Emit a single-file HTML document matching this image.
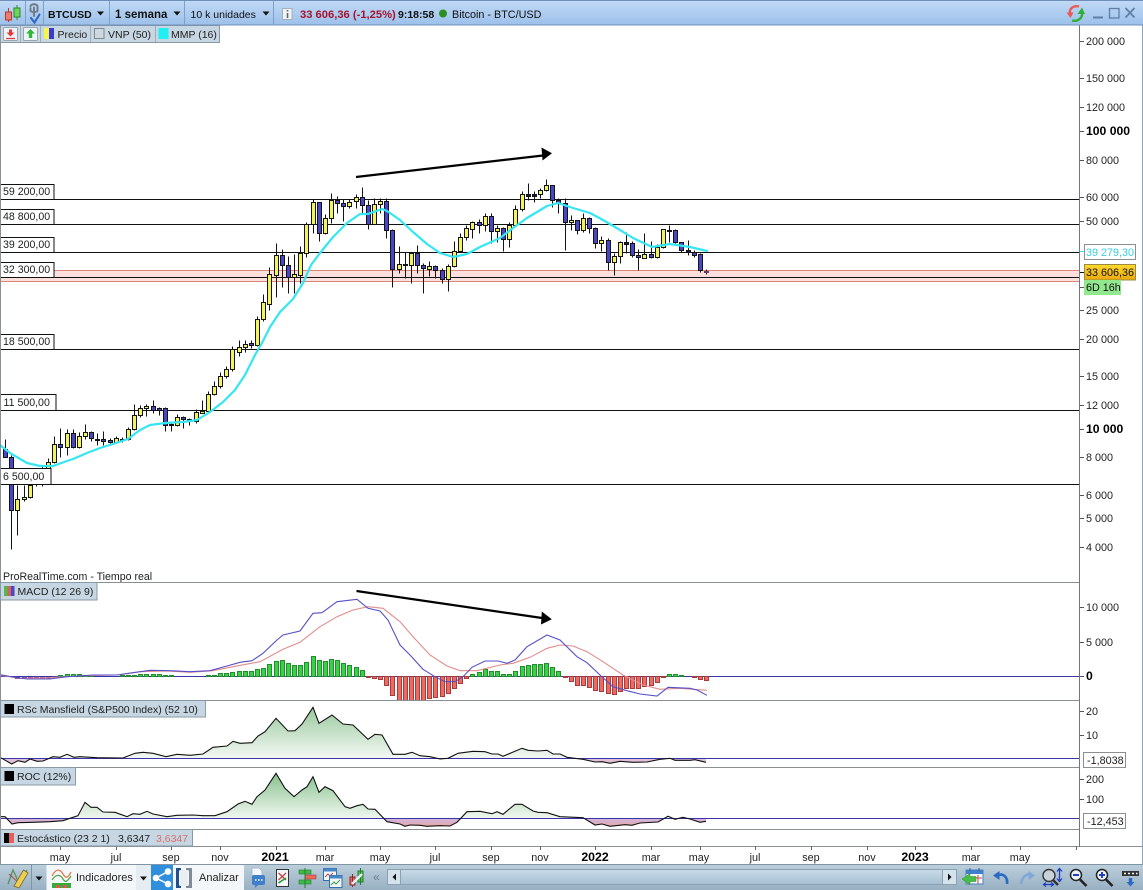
<!DOCTYPE html>
<html lang="es">
<head>
<meta charset="utf-8">
<title>BTCUSD</title>
<style>
html,body{margin:0;padding:0;background:#fff;width:1143px;height:890px;overflow:hidden}
svg{display:block;position:absolute;left:0;top:0;filter:blur(.3px)}
text{font-family:"Liberation Sans",Arial,sans-serif;fill:#222;font-size:10.7px}
.lv{font-size:10.6px}
.ax{font-size:10.8px}
.xl{font-size:10.8px;text-anchor:middle}
.lg{font-size:10.5px}
.b{font-weight:bold;fill:#000}
</style>
</head>
<body>
<svg width="1143" height="890" viewBox="0 0 1143 890" xmlns="http://www.w3.org/2000/svg">
<defs>
<linearGradient id="tb" x1="0" y1="0" x2="0" y2="1"><stop offset="0" stop-color="#c2daf6"/><stop offset="1" stop-color="#9cc0ea"/></linearGradient>
<linearGradient id="bb" x1="0" y1="0" x2="0" y2="1"><stop offset="0" stop-color="#bccfdc"/><stop offset="1" stop-color="#98b0c2"/></linearGradient>
<linearGradient id="sb" x1="0" y1="0" x2="0" y2="1"><stop offset="0" stop-color="#c9dbe8"/><stop offset="1" stop-color="#a6bfd2"/></linearGradient>
<linearGradient id="or" x1="0" y1="0" x2="0" y2="1"><stop offset="0" stop-color="#ffd92e"/><stop offset="1" stop-color="#e8a90c"/></linearGradient>
<linearGradient id="gu1" gradientUnits="userSpaceOnUse" x1="0" y1="707" x2="0" y2="758"><stop offset="0" stop-color="#98c99c"/><stop offset="1" stop-color="#f4f8f4"/></linearGradient>
<linearGradient id="gd1" gradientUnits="userSpaceOnUse" x1="0" y1="758" x2="0" y2="765"><stop offset="0" stop-color="#d8c4ec"/><stop offset="1" stop-color="#e8b8b8"/></linearGradient>
<linearGradient id="gu2" gradientUnits="userSpaceOnUse" x1="0" y1="773" x2="0" y2="818"><stop offset="0" stop-color="#88c28d"/><stop offset="1" stop-color="#f0f7f0"/></linearGradient>
<linearGradient id="gd2" gradientUnits="userSpaceOnUse" x1="0" y1="818" x2="0" y2="827"><stop offset="0" stop-color="#cdb8ea"/><stop offset="1" stop-color="#eaa49c"/></linearGradient>
<clipPath id="u1"><rect x="0" y="700" width="1080" height="58.3"/></clipPath>
<clipPath id="d1"><rect x="0" y="758.3" width="1080" height="9"/></clipPath>
<clipPath id="u2"><rect x="0" y="768" width="1080" height="50.3"/></clipPath>
<clipPath id="d2"><rect x="0" y="818.3" width="1080" height="11"/></clipPath>
</defs>

<rect width="1143" height="890" fill="#fff"/>

<!-- band and horizontal levels -->
<rect x="1" y="270" width="1079" height="11.5" fill="#fbdfdc"/>
<g stroke="#111" stroke-width="1" shape-rendering="crispEdges">
<path d="M1 199.5H1080M1 224.5H1080M1 252.5H1080M1 277.5H1080M1 349.5H1080M1 410.5H1080M1 484.5H1080"/>
</g>
<path d="M1 270.5H1080M1 281.5H1080" stroke="#d98678" stroke-width="1" shape-rendering="crispEdges"/>

<!-- candles -->
<g transform="translate(.5 .5)" stroke-width="1" stroke="#141414">
<path fill="none" d="M5 439V457M11 455V549M17 485V535M24 485V501M30 485V498M36 470V486M42 465V486M48 458V476M54 436V463M60 428V457M67 429V455M73 429V448M79 432V448M85 424V439M91 431V441M97 433V445M103 431V445M110 438V443M116 436V443M122 437V442M128 427V440M134 404V430M140 405V417M146 404V416M153 400V413M159 407V415M165 407V431M171 423V431M177 414V426M183 416V428M189 418V425M196 409V423M202 400V413M208 391V412M214 381V395M220 372V388M226 366V378M232 346V371M239 340V356M245 340V352M251 340V348M257 316V346M263 294V321M269 267V310M276 243V297M282 249V287M288 256V293M294 254V293M300 246V283M306 222V257M313 199V233M319 202V241M325 214V234M331 193V223M337 196V213M343 199V221M349 199V208M356 194V208M362 187V213M368 200V229M374 198V224M380 198V213M386 198V238M392 229V287M399 246V273M405 252V278M411 252V283M417 245V273M423 263V293M429 261V276M435 265V278M442 268V283M448 264V291M454 241V267M460 233V252M466 225V240M472 221V238M479 219V233M485 213V231M491 213V243M497 225V242M503 227V251M509 222V247M515 205V226M522 191V211M528 183V200M534 191V202M540 188V198M546 179V191M552 185V207M558 198V213M565 198V250M571 215V230M577 220V234M583 213V232M589 217V233M595 227V248M601 236V251M608 238V270M614 253V275M620 241V263M626 232V253M632 241V257M638 249V270M644 233V258M651 241V258M657 244V258M663 229V248M669 225V242M675 229V243M681 242V252M688 240V255M694 250V257M700 253V272M706 269V274"/>
<path fill="#f3f35c" d="M15 499h4V510h-4zM22 497h4V499h-4zM28 485h4V497h-4zM34 475h4V481h-4zM40 470h4V478h-4zM46 462h4V474h-4zM52 444h4V462h-4zM65 433h4V447h-4zM77 436h4V447h-4zM83 432h4V436h-4zM114 438h4V442h-4zM126 429h4V439h-4zM132 415h4V429h-4zM138 408h4V415h-4zM144 406h4V408h-4zM175 417h4V425h-4zM187 419h4V420h-4zM194 412h4V421h-4zM200 411h4V413h-4zM206 394h4V411h-4zM212 386h4V394h-4zM218 376h4V386h-4zM224 369h4V376h-4zM230 349h4V369h-4zM237 347h4V352h-4zM243 344h4V347h-4zM255 319h4V345h-4zM261 302h4V319h-4zM267 274h4V304h-4zM274 255h4V275h-4zM292 274h4V277h-4zM298 253h4V275h-4zM304 224h4V253h-4zM311 202h4V224h-4zM323 218h4V233h-4zM329 200h4V218h-4zM347 202h4V206h-4zM354 197h4V201h-4zM372 204h4V224h-4zM378 201h4V204h-4zM397 264h4V269h-4zM409 253h4V265h-4zM427 266h4V269h-4zM446 266h4V279h-4zM452 251h4V266h-4zM458 237h4V251h-4zM464 228h4V237h-4zM470 222h4V229h-4zM483 216h4V225h-4zM495 228h4V231h-4zM507 225h4V239h-4zM513 209h4V225h-4zM520 194h4V209h-4zM538 190h4V194h-4zM544 185h4V190h-4zM569 220h4V222h-4zM581 218h4V230h-4zM599 240h4V243h-4zM612 256h4V262h-4zM618 242h4V256h-4zM642 254h4V258h-4zM655 247h4V257h-4zM661 229h4V247h-4z"/>
<path fill="#4747c6" d="M3 449h4V457h-4zM9 457h4V510h-4zM58 444h4V447h-4zM71 433h4V447h-4zM89 432h4V438h-4zM101 439h4V441h-4zM108 440h4V442h-4zM120 439h4V440h-4zM151 406h4V410h-4zM157 408h4V410h-4zM163 408h4V425h-4zM169 424h4V425h-4zM181 417h4V419h-4zM249 343h4V345h-4zM280 255h4V265h-4zM286 265h4V277h-4zM317 202h4V233h-4zM335 200h4V203h-4zM341 203h4V206h-4zM360 197h4V205h-4zM366 205h4V224h-4zM384 201h4V230h-4zM390 230h4V269h-4zM415 253h4V265h-4zM421 265h4V268h-4zM433 266h4V270h-4zM440 270h4V279h-4zM477 222h4V225h-4zM489 216h4V231h-4zM501 228h4V239h-4zM550 185h4V200h-4zM556 200h4V203h-4zM563 203h4V222h-4zM575 220h4V230h-4zM587 218h4V228h-4zM593 228h4V243h-4zM606 240h4V262h-4zM630 243h4V255h-4zM636 255h4V257h-4zM649 254h4V257h-4zM673 230h4V242h-4zM679 242h4V250h-4zM692 252h4V255h-4zM698 254h4V270h-4z"/>
<path fill="#1a1a3a" d="M95 439h4V440h-4zM403 264h4V265h-4zM526 194h4V196h-4zM532 194h4V196h-4zM624 242h4V244h-4zM667 230h4V231h-4zM686 250h4V252h-4z"/>
<path fill="#a05a9a" stroke="#6a3a6a" d="M704 271h4V272h-4z"/>
</g>

<!-- MMP 16 -->
<polyline fill="none" stroke="#35e6f2" stroke-width="2.2" stroke-linejoin="round" stroke-linecap="round" points="0,445 10,453 27,463 40,466 53,466 67,461 73,459 87,453 100,448 113,444 128,439 140,430 150,425 165,423 183,422 197,420 210,412 223,402 235,390 245,375 255,355 262,343 270,327 280,312 293,299 303,283 311,265 320,253 333,237 347,223 360,214 368,214 382,209 387,211 400,220 413,232 427,244 440,253 453,257 467,254 480,247 500,238 513,228 527,218 547,206 558,203 573,208 590,213 603,220 620,230 633,238 652,247 670,244 690,247 707,251"/>

<!-- arrow 1 -->
<path d="M356 177L543 155.5" stroke="#000" stroke-width="2.2" fill="none"/>
<path d="M541.5 147.5L552 153.2L542.5 160.5Z" fill="#000"/>

<!-- level labels -->
<g fill="#fff" stroke="#111" stroke-width="1" shape-rendering="crispEdges">
<rect x="-1" y="184.5" width="55" height="15"/>
<rect x="-1" y="209.5" width="55" height="15"/>
<rect x="-1" y="237.5" width="55" height="15"/>
<rect x="-1" y="262.5" width="55" height="15"/>
<rect x="-1" y="334.5" width="55" height="15"/>
<rect x="-1" y="394.5" width="57" height="16"/>
<rect x="-1" y="468.5" width="52" height="16"/>
</g>
<text class="lv" x="3" y="195">59 200,00</text>
<text class="lv" x="3" y="220">48 800,00</text>
<text class="lv" x="3" y="248">39 200,00</text>
<text class="lv" x="3" y="273">32 300,00</text>
<text class="lv" x="3" y="345">18 500,00</text>
<text class="lv" x="3.5" y="406">11 500,00</text>
<text class="lv" x="3" y="480">6 500,00</text>
<text class="lv" x="3" y="580" style="font-size:10.6px">ProRealTime.com - Tiempo real</text>

<!-- MACD panel -->
<path d="M1 676.5H1080" stroke="#3a36a6" stroke-width="1.3" shape-rendering="crispEdges"/>
<g transform="translate(.5 .5)">
<path fill="#3cd048" stroke="#1f8f2c" d="M58 675h4V676h-4zM65 674h4V676h-4zM71 674h4V676h-4zM77 674h4V676h-4zM83 675h4V676h-4zM89 675h4V676h-4zM120 675h4V676h-4zM126 675h4V676h-4zM132 675h4V676h-4zM138 674h4V676h-4zM144 674h4V676h-4zM151 674h4V676h-4zM157 674h4V676h-4zM163 675h4V676h-4zM169 675h4V676h-4zM206 675h4V676h-4zM212 675h4V676h-4zM218 673h4V676h-4zM224 673h4V676h-4zM230 672h4V676h-4zM237 671h4V676h-4zM243 671h4V676h-4zM249 671h4V676h-4zM255 669h4V676h-4zM261 668h4V676h-4zM267 664h4V676h-4zM274 661h4V676h-4zM280 660h4V676h-4zM286 663h4V676h-4zM292 665h4V676h-4zM298 665h4V676h-4zM304 662h4V676h-4zM311 656h4V676h-4zM317 660h4V676h-4zM323 661h4V676h-4zM329 659h4V676h-4zM335 660h4V676h-4zM341 663h4V676h-4zM347 665h4V676h-4zM354 667h4V676h-4zM360 670h4V676h-4zM470 674h4V676h-4zM477 672h4V676h-4zM483 669h4V676h-4zM489 671h4V676h-4zM495 671h4V676h-4zM501 674h4V676h-4zM507 674h4V676h-4zM513 671h4V676h-4zM520 666h4V676h-4zM526 665h4V676h-4zM532 664h4V676h-4zM538 664h4V676h-4zM544 663h4V676h-4zM550 667h4V676h-4zM556 671h4V676h-4zM667 674h4V676h-4zM673 674h4V676h-4zM679 675h4V676h-4z"/>
<path fill="#ec6a62" stroke="#a83a3a" d="M366 676h4V677h-4zM372 676h4V678h-4zM378 676h4V679h-4zM384 676h4V685h-4zM390 676h4V695h-4zM397 676h4V700h-4zM403 676h4V700h-4zM409 676h4V700h-4zM415 676h4V700h-4zM421 676h4V700h-4zM427 676h4V698h-4zM433 676h4V697h-4zM440 676h4V696h-4zM446 676h4V693h-4zM452 676h4V688h-4zM458 676h4V683h-4zM464 676h4V678h-4zM563 676h4V677h-4zM569 676h4V681h-4zM575 676h4V685h-4zM581 676h4V685h-4zM587 676h4V687h-4zM593 676h4V690h-4zM599 676h4V691h-4zM606 676h4V693h-4zM612 676h4V694h-4zM618 676h4V691h-4zM624 676h4V688h-4zM630 676h4V688h-4zM636 676h4V688h-4zM642 676h4V686h-4zM649 676h4V685h-4zM655 676h4V682h-4zM661 676h4V677h-4zM692 676h4V677h-4zM698 676h4V679h-4zM704 676h4V680h-4z"/>
<path fill="#7a3fb0" stroke="#6a3aa0" d="M15 677h4V678h-4zM22 677h4V678h-4zM28 677h4V678h-4zM34 677h4V678h-4zM40 677h4V678h-4zM46 677h4V678h-4z"/>
</g>
<polyline fill="none" stroke="#e38c8c" stroke-width="1.1" points="0,675.3 20,678.3 50,677.7 83,675.7 117,675 140,671.7 167,671 190,672.3 213,670.7 233,666.7 260,661.7 283,649.3 300,642.3 320,626.7 337,616.7 353,610 368,606.7 383,608.3 400,621.7 413,636.7 430,655 447,666 460,670.7 477,670.7 500,665 513,663.3 530,657.3 547,648.3 560,645 573,646 587,651.7 603,661.7 623,675 643,685 660,689.3 680,688.3 707,690.3"/>
<polyline fill="none" stroke="#5650c8" stroke-width="1.1" points="0,674.7 13,677 27,679 50,679 67,676.7 93,675 117,675 133,672.7 150,670.3 170,670.7 190,671.7 210,670.7 227,666 240,662.3 252,660.7 263,653.3 277,640 283,635 300,631 313,613.3 322,612.7 337,601.7 357,599.3 368,608.3 380,611 388,620 400,645 410,655 423,669.3 435,676.7 445,681.7 455,681.7 463,676.7 472,667.3 485,661 498,661 507,663.3 515,660 527,646.7 547,635 560,640 577,656.7 587,662.7 600,675 613,686.7 627,690.7 640,694 657,696 668,687.3 690,688.3 697,690 707,695.3"/>
<path d="M356.5 591L542 618" stroke="#000" stroke-width="2.2" fill="none"/>
<path d="M541.8 611.5L551.8 619.3L541 624.5Z" fill="#000"/>

<!-- RSc panel -->
<path clip-path="url(#u1)" fill="url(#gu1)" d="M0,758.3 0,757.3 11.7,764 18,760.7 25,762.3 30,759 37,761.3 43,761 53,756.7 60,757.3 67,754.3 74,757.3 80,756.7 97,757.7 123,758 135,753.3 143,752.3 153,753.3 166,756.7 177,754.3 190,755.3 203,754 213,747.3 227,746 233,741.3 240,743.3 252,742.7 258,736 265,731.7 276,718.3 288,731 295,730.7 302,724 313,707.3 319,723.3 332,715 343,724 353,725 368,739.3 375,734.3 382,735 393,754.3 405,754.3 412,752.3 420,755.7 430,756.7 440,759 448,758.3 458,753.3 473,751.3 485,751.7 492,754 498,754 503,756.3 522,748.3 528,750.3 538,751 547,750.3 553,754 560,754 567,757.3 583,759.3 595,762 602,761.7 610,763.3 620,761.3 633,762.3 647,762 660,759.3 670,758.3 675,760.3 690,760.3 695,759.7 706,762.3 706,758.3Z"/>
<path clip-path="url(#d1)" fill="url(#gd1)" d="M0,758.3 0,757.3 11.7,764 18,760.7 25,762.3 30,759 37,761.3 43,761 53,756.7 123,758 440,759 448,758.3 458,753.3 567,757.3 583,759.3 595,762 602,761.7 610,763.3 620,761.3 633,762.3 647,762 660,759.3 670,758.3 675,760.3 690,760.3 695,759.7 706,762.3 706,758.3Z"/>
<path d="M1 758.5H1080" stroke="#3a36a6" stroke-width="1.2" shape-rendering="crispEdges"/>
<polyline fill="none" stroke="#111" stroke-width="1.1" points="0,757.3 11.7,764 18,760.7 25,762.3 30,759 37,761.3 43,761 53,756.7 60,757.3 67,754.3 74,757.3 80,756.7 97,757.7 123,758 135,753.3 143,752.3 153,753.3 166,756.7 177,754.3 190,755.3 203,754 213,747.3 227,746 233,741.3 240,743.3 252,742.7 258,736 265,731.7 276,718.3 288,731 295,730.7 302,724 313,707.3 319,723.3 332,715 343,724 353,725 368,739.3 375,734.3 382,735 393,754.3 405,754.3 412,752.3 420,755.7 430,756.7 440,759 448,758.3 458,753.3 473,751.3 485,751.7 492,754 498,754 503,756.3 522,748.3 528,750.3 538,751 547,750.3 553,754 560,754 567,757.3 583,759.3 595,762 602,761.7 610,763.3 620,761.3 633,762.3 647,762 660,759.3 670,758.3 675,760.3 690,760.3 695,759.7 706,762.3"/>

<!-- ROC panel -->
<path clip-path="url(#u2)" fill="url(#gu2)" d="M0,818.3 0,816.7 5,816.7 12,824 78,815.7 85,802.3 91,807.3 97,807.3 103,812 115,812.3 127,816.7 133,813.7 140,814.3 147,811.3 153,814 167,816.7 177,815.3 193,815 203,815.7 215,815.7 227,811.7 238,804 245,801.3 252,804.3 257,796.7 265,790 276,773.3 285,788.3 294,796.7 302,790 307,786.7 313,776.7 319,792.3 325,786.7 333,790.7 345,806.7 350,808.3 357,805.7 363,804.3 368,809 375,809.3 387,821.7 457,822.3 467,811.7 480,811.3 492,813.7 497,811.7 503,814.3 515,804.3 522,804.3 533,811 538,812.3 547,812.7 560,816.7 583,817.7 595,825 658,822 668,816.3 675,819.3 683,817.3 690,819 700,822.3 706,821.3 706,818.3Z"/>
<path clip-path="url(#d2)" fill="url(#gd2)" d="M0,818.3 5,816.7 12,824 18,822.7 33,822.3 50,821.7 63,820.7 78,815.7 370,809 387,821.7 400,824 405,826.3 410,825 420,825.3 427,826.3 440,825.7 450,826 457,822.3 467,811.7 583,817.7 595,825 602,824 610,826.3 625,824.7 632,825.3 640,823 658,822 668,816.3 675,819.3 683,817.3 690,819 700,822.3 706,821.3 706,818.3Z"/>
<path d="M1 818.5H1080" stroke="#3a36a6" stroke-width="1.2" shape-rendering="crispEdges"/>
<polyline fill="none" stroke="#111" stroke-width="1.1" points="0,816.7 5,816.7 12,824 18,822.7 33,822.3 50,821.7 63,820.7 78,815.7 85,802.3 91,807.3 97,807.3 103,812 115,812.3 127,816.7 133,813.7 140,814.3 147,811.3 153,814 167,816.7 177,815.3 193,815 203,815.7 215,815.7 227,811.7 238,804 245,801.3 252,804.3 257,796.7 265,790 276,773.3 285,788.3 294,796.7 302,790 307,786.7 313,776.7 319,792.3 325,786.7 333,790.7 345,806.7 350,808.3 357,805.7 363,804.3 368,809 375,809.3 387,821.7 400,824 405,826.3 410,825 420,825.3 427,826.3 440,825.7 450,826 457,822.3 467,811.7 480,811.3 492,813.7 497,811.7 503,814.3 515,804.3 522,804.3 533,811 538,812.3 547,812.7 560,816.7 583,817.7 595,825 602,824 610,826.3 625,824.7 632,825.3 640,823 658,822 668,816.3 675,819.3 683,817.3 690,819 700,822.3 706,821.3"/>

<!-- panel separators & frame -->
<g stroke="#8a8f94" stroke-width="1" shape-rendering="crispEdges" fill="none">
<path d="M1 582.5H1080M1 700.5H1080M1 767.5H1080M1 829.5H1080"/>
<path d="M0 846.5H1143" stroke="#8a8f94"/>
<path d="M0.5 25V864"/>
<path d="M1079.5 25V847" stroke="#70777d"/>
<path d="M1142.5 25V864" stroke="#8fa4b8"/>
</g>

<!-- price axis ticks -->
<path stroke="#555" stroke-width="1" shape-rendering="crispEdges" d="M1080 41.5h4M1080 78.5h4M1080 107.5h4M1080 131.5h4M1080 160.5h4M1080 197.5h4M1080 221.5h4M1080 310.5h4M1080 339.5h4M1080 376.5h4M1080 405.5h4M1080 429.5h4M1080 457.5h4M1080 495.5h4M1080 518.5h4M1080 547.5h4M1080 607.5h4M1080 642.5h4M1080 676.5h4M1080 711.5h4M1080 735.5h4M1080 779.5h4M1080 799.5h4"/>
<g class="ax">
<text class="ax" x="1086" y="45">200 000</text>
<text class="ax" x="1086" y="82">150 000</text>
<text class="ax" x="1086" y="111">120 000</text>
<text class="ax b" x="1086" y="135" style="font-size:12.2px">100 000</text>
<text class="ax" x="1086" y="164">80 000</text>
<text class="ax" x="1086" y="201">60 000</text>
<text class="ax" x="1086" y="225">50 000</text>
<text class="ax" x="1086" y="314">25 000</text>
<text class="ax" x="1086" y="343">20 000</text>
<text class="ax" x="1086" y="380">15 000</text>
<text class="ax" x="1086" y="409">12 000</text>
<text class="ax b" x="1086" y="433" style="font-size:12.2px">10 000</text>
<text class="ax" x="1086" y="461">8 000</text>
<text class="ax" x="1086" y="499">6 000</text>
<text class="ax" x="1086" y="522">5 000</text>
<text class="ax" x="1086" y="551">4 000</text>
<text class="ax" x="1086" y="611">10 000</text>
<text class="ax" x="1086" y="646">5 000</text>
<text class="ax b" x="1086" y="680" style="font-size:12.2px">0</text>
<text class="ax" x="1086" y="715">20</text>
<text class="ax" x="1086" y="739">10</text>
<text class="ax" x="1086" y="783">200</text>
<text class="ax" x="1086" y="803">100</text>
</g>

<!-- price badges -->
<path d="M1080 251.5h4" stroke="#35e6f2" shape-rendering="crispEdges"/>
<rect x="1084.5" y="244.5" width="51" height="15" fill="#fff" stroke="#8a8f94" shape-rendering="crispEdges"/>
<text class="ax" x="1086" y="256" style="fill:#37cfe0">39 279,30</text>
<path d="M1080 272.5h4" stroke="#111" shape-rendering="crispEdges"/>
<rect x="1084.5" y="264.5" width="51" height="15.5" fill="url(#or)" stroke="#9a8a40" shape-rendering="crispEdges"/>
<text class="ax" x="1086" y="276" style="fill:#111">33 606,36</text>
<path d="M1080 287.5h4" stroke="#555" shape-rendering="crispEdges"/>
<rect x="1084" y="280" width="37" height="15" fill="#92e88e"/>
<text class="ax" x="1086" y="291" style="fill:#111">6D 16h</text>
<rect x="1083.5" y="752.5" width="42" height="15" fill="#fff" stroke="#8a8f94" shape-rendering="crispEdges"/>
<text class="ax" x="1087" y="764">-1,8038</text>
<rect x="1083.5" y="813.5" width="42" height="15" fill="#fff" stroke="#8a8f94" shape-rendering="crispEdges"/>
<text class="ax" x="1087" y="825">-12,453</text>

<!-- x axis -->
<path stroke="#666" shape-rendering="crispEdges" d="M60.5 846v4M116.5 846v4M171.5 846v4M220.5 846v4M276.5 846v4M325.5 846v4M380.5 846v4M435.5 846v4M491.5 846v4M540.5 846v4M595.5 846v4M651.5 846v4M700.5 846v4M755.5 846v4M811.5 846v4M867.5 846v4M915.5 846v4M971.5 846v4M1020.5 846v4M1076.5 846v4"/>
<text class="xl" x="60" y="861">may</text>
<text class="xl" x="116" y="861">jul</text>
<text class="xl" x="171" y="861">sep</text>
<text class="xl" x="220" y="861">nov</text>
<text class="xl b" x="275" y="861" style="font-size:12.3px">2021</text>
<text class="xl" x="325" y="861">mar</text>
<text class="xl" x="380" y="861">may</text>
<text class="xl" x="435" y="861">jul</text>
<text class="xl" x="491" y="861">sep</text>
<text class="xl" x="540" y="861">nov</text>
<text class="xl b" x="595" y="861" style="font-size:12.3px">2022</text>
<text class="xl" x="651" y="861">mar</text>
<text class="xl" x="699" y="861">may</text>
<text class="xl" x="755" y="861">jul</text>
<text class="xl" x="811" y="861">sep</text>
<text class="xl" x="867" y="861">nov</text>
<text class="xl b" x="915" y="861" style="font-size:12.3px">2023</text>
<text class="xl" x="971" y="861">mar</text>
<text class="xl" x="1020" y="861">may</text>

<!-- indicator legends -->
<g fill="#c6d6e2" stroke="#8a99a6" shape-rendering="crispEdges">
<rect x="0.5" y="582.5" width="96.5" height="17.5"/>
<rect x="0.5" y="700.5" width="205" height="16.5"/>
<rect x="0.5" y="767.5" width="75" height="17.5"/>
<rect x="0.5" y="829.5" width="192" height="16.5"/>
</g>
<rect x="4" y="586" width="3.5" height="10" fill="#55b84f"/><rect x="7.5" y="586" width="3.5" height="10" fill="#d8605a"/><rect x="11" y="586" width="3.5" height="10" fill="#4a48c8"/>
<text class="lg" x="17.5" y="595">MACD (12 26 9)</text>
<rect x="4.5" y="704" width="9.5" height="10" fill="#000"/>
<text class="lg" x="17" y="713">RSc Mansfield (S&amp;P500 Index) (52 10)</text>
<rect x="4.5" y="771" width="9.5" height="10" fill="#000"/>
<text class="lg" x="17" y="780">ROC (12%)</text>
<rect x="4" y="833" width="5" height="10" fill="#000"/><rect x="9" y="833" width="5" height="10" fill="#e4605a"/>
<text class="lg" x="17" y="842">Estocástico (23 2 1)</text>
<text class="lg" x="118" y="842">3,6347</text>
<text class="lg" x="156" y="842" style="fill:#d9706c">3,6347</text>

<!-- legend row -->
<rect x="0.5" y="25.5" width="219" height="17" fill="#c6d6e2" stroke="#8a99a6" shape-rendering="crispEdges"/>
<path d="M90.5 26v16M155.5 26v16M20.5 26v16M40.5 26v16" stroke="#a0aeb9" shape-rendering="crispEdges"/>
<rect x="3.5" y="27.5" width="14" height="13" rx="1" fill="#eef3f7" stroke="#9aa7b2"/>
<path d="M10.5 36.5L6.5 32.5H9V29.5H12V32.5H14.5Z" fill="#e23a3a"/><path d="M6 38.5h9" stroke="#e23a3a" stroke-width="1.3"/>
<rect x="23.5" y="27.5" width="14" height="13" rx="1" fill="#eef3f7" stroke="#9aa7b2"/>
<path d="M30.5 29L35 33.5H32.2V38H28.8V33.5H26Z" fill="#2fb838"/>
<rect x="44" y="28" width="5" height="11" fill="#f6f64a"/><rect x="49" y="28" width="5" height="11" fill="#3a3ad0"/>
<text class="lg" x="57.5" y="38">Precio</text>
<rect x="94.5" y="28.5" width="9.5" height="10" fill="#cfd8de" stroke="#7f8a92"/>
<text class="lg" x="108" y="38">VNP (50)</text>
<rect x="158.5" y="28" width="10" height="11" fill="#20f0f4"/>
<text class="lg" x="171" y="38">MMP (16)</text>

<!-- top toolbar -->
<rect x="0" y="0" width="1143" height="25" fill="url(#tb)"/>
<path d="M0 0.5H1143M0 25H1143" stroke="#6e90b8" shape-rendering="crispEdges"/>
<path d="M25.5 1V25M43.5 1V25M109.5 1V25M184.5 1V25M273.5 1V25" stroke="#7e9fc6" shape-rendering="crispEdges"/>
<path d="M8.5 8V22" stroke="#c0392b"/><rect x="5.5" y="12" width="6" height="8" fill="#ee7b70" stroke="#b03a30"/>
<path d="M17 5V20" stroke="#2a8a2a"/><rect x="14" y="8" width="6" height="9" fill="#6ed35c" stroke="#2a8a2a"/>
<g fill="none" stroke-linecap="round">
<path d="M30.5 6.5C30.5 3.5 37.5 3.5 37.5 6.5V10.5C37.5 12.5 30.5 12.5 30.5 10.5V8.5M34 7.5V16" stroke="#6d7a88" stroke-width="1.9"/>
<path d="M31 18L34.5 22.5L39.5 14.5" stroke="#3068c8" stroke-width="2.1"/>
</g>
<text class="b" x="48" y="18" style="font-size:10.5px;fill:#111">BTCUSD</text>
<path d="M97 11.5h7l-3.5 4z" fill="#111"/>
<text class="b" x="115" y="18" style="font-size:11.5px;fill:#111">1 semana</text>
<path d="M173.5 11.5h7l-3.5 4z" fill="#111"/>
<text x="190.5" y="18" style="font-size:10.5px;fill:#111">10 k unidades</text>
<path d="M262.5 11.5h7l-3.5 4z" fill="#111"/>
<rect x="282.5" y="8.5" width="9.5" height="11" fill="#f1f3f5" stroke="#a5b0ba"/>
<path d="M287.5 10v1.5M287.5 13v5" stroke="#5f6b74" stroke-width="1.6"/>
<text class="b" x="300" y="18" style="font-size:11.2px;fill:#a8142c">33 606,36 (-1,25%)</text>
<text class="b" x="398" y="18" style="font-size:10.5px;fill:#111">9:18:58</text>
<circle cx="443" cy="13.5" r="4" fill="#2f8f22"/>
<text x="452" y="18" style="font-size:10.8px;fill:#111">Bitcoin - BTC/USD</text>

<!-- window controls -->
<path d="M1079 6.5C1073 5 1069 9 1070 14" fill="none" stroke="#ec5a55" stroke-width="2.4"/>
<path d="M1066.5 12.5L1070.5 18L1073.5 12.5Z" fill="#ec5a55"/>
<path d="M1072 20.5C1078 22 1083 18 1082 12" fill="none" stroke="#2fae38" stroke-width="2.4"/>
<path d="M1077.5 14L1082 7.5L1085 14Z" fill="#2fae38"/>
<path d="M1093 17.5h10" stroke="#5f7fa6" stroke-width="2"/>
<rect x="1109.5" y="8.5" width="9.5" height="9.5" fill="none" stroke="#5f7fa6" stroke-width="1.3"/>
<path d="M1125.5 8L1134.5 17.5M1134.5 8L1125.5 17.5" stroke="#5f7fa6" stroke-width="1.8"/>

<!-- bottom toolbar -->
<rect x="0" y="864" width="1143" height="26" fill="url(#bb)"/>
<path d="M0 864.5H1143" stroke="#7f95a5" shape-rendering="crispEdges"/>
<rect x="46.5" y="865" width="89.5" height="25" fill="#f4f7f9"/>
<rect x="136" y="865" width="15" height="25" fill="#e6edf2"/>
<rect x="151" y="865" width="22" height="25" fill="#2f8fdc"/>
<rect x="173" y="865" width="71" height="25" fill="#f4f7f9"/>
<path d="M31.5 865V890" stroke="#7f95a5"/>

<!-- draw tools icon -->
<path d="M8 884L13 870L19 883L27 870" fill="none" stroke="#5b8f5b" stroke-width="1.3"/>
<path d="M9 874L20 884" stroke="#b04a4a" stroke-width="1.1"/>
<path d="M14 886L23.5 870L28 873L19 888Z" fill="#edcf52" stroke="#7a6a2a" stroke-width=".8"/>
<path d="M35.5 876.5h7l-3.5 4z" fill="#111"/>

<!-- Indicadores icon -->
<path d="M52 876C56 868 60 869 63 874S68 878 71 872" fill="none" stroke="#e07a50" stroke-width="1.3"/>
<path d="M52 880C56 874 60 874 63 879S68 880 71 876" fill="none" stroke="#4fa84f" stroke-width="1.3"/>
<path d="M52 883H71V888H52Z" fill="#2fae38"/>
<rect x="56" y="885" width="4" height="3" fill="#e4534d"/><rect x="63" y="885" width="4" height="3" fill="#e4534d"/>
<text x="76" y="881" style="font-size:11px;fill:#222">Indicadores</text>
<path d="M140 876.5h7l-3.5 4z" fill="#111"/>

<!-- share icon -->
<g fill="#fff" stroke="#fff"><circle cx="156" cy="878" r="2.8"/><circle cx="168" cy="871.5" r="2.8"/><circle cx="168" cy="884" r="2.8"/><path d="M156 878L168 871.5M156 878L168 884" stroke-width="1.5" fill="none"/></g>

<!-- Analizar icon -->
<path d="M181 868H176V888H181V885.5H179V870.5H181Z" fill="#1f4f8c"/>
<path d="M186 868H192V888H186V885.5H189V870.5H186Z" fill="#7f8c98"/>
<rect x="180" y="870" width="8" height="16" fill="#e8eef2"/>
<text x="199" y="881" style="font-size:11px;fill:#222">Analizar</text>

<!-- small tool icons -->
<path d="M252 868h7l3 3v8h-10z" fill="#f4f7fa" stroke="#9cb0c0" stroke-width=".7"/>
<rect x="252" y="875" width="13" height="10" rx="2" fill="#3f7fcc"/><path d="M255 885v3l3-3z" fill="#3f7fcc"/>
<path d="M255 880h1.5M258 880h1.5M261 880h1.5" stroke="#fff" stroke-width="1.5"/>
<rect x="276.5" y="869.5" width="12" height="17" fill="#f4f7fa" stroke="#333"/>
<path d="M278.5 873L286 880M278.5 880L286 873" stroke="#c43a3a" stroke-width="1.2"/>
<path d="M278.5 883L286 878" stroke="#2a9a3a" stroke-width="1.6"/>
<rect x="299" y="870" width="12" height="4" fill="#43b84a" stroke="#1f7f2a" stroke-width=".6"/>
<rect x="305" y="875" width="11" height="4" fill="#e8695e" stroke="#a83a3a" stroke-width=".6"/>
<rect x="299" y="880" width="12" height="4" fill="#43b84a" stroke="#1f7f2a" stroke-width=".6"/>
<path d="M305 868V888" stroke="#1f7f2a" stroke-width="1"/>
<rect x="323.5" y="868.5" width="13" height="12" fill="#f4f7fa" stroke="#3070b0"/><rect x="323.5" y="868.5" width="13" height="3" fill="#4a86c4"/>
<path d="M325 877l3-3 2 2 3-3" stroke="#c04a40" fill="none"/>
<rect x="329.5" y="875.5" width="12.5" height="12" fill="#f4f7fa" stroke="#3070b0"/><rect x="329.5" y="875.5" width="12.5" height="3" fill="#4a86c4"/>
<path d="M331 885l3-3 2 2 4-4" stroke="#3aa040" fill="none"/>
<rect x="350" y="877" width="5" height="8" fill="#e8695e" stroke="#8a2a2a"/><path d="M352.5 874v13" stroke="#8a2a2a"/>
<rect x="358" y="871" width="5" height="11" fill="#4bc04f" stroke="#1f7f2a"/><path d="M360.5 868v17" stroke="#1f7f2a"/>
<path d="M352 884L362 874" stroke="#eef" stroke-width="2.4"/>
<text x="373" y="881" style="font-size:12px;fill:#6a7f90">«</text>

<!-- scrollbar -->
<rect x="387.5" y="869.5" width="569" height="15" fill="url(#sb)" stroke="#8aa2b4" shape-rendering="crispEdges"/>
<rect x="387.5" y="869.5" width="13" height="15" fill="#d5e3ed" stroke="#8aa2b4" shape-rendering="crispEdges"/>
<path d="M396 873.5v7l-3.5-3.5z" fill="#111"/>
<rect x="942.5" y="869.5" width="14" height="15" fill="#d5e3ed" stroke="#8aa2b4" shape-rendering="crispEdges"/>
<path d="M948 873.5v7l3.5-3.5z" fill="#111"/>

<!-- right tools -->
<rect x="966" y="870" width="17" height="14" fill="#f4f7fa" stroke="#4a86c4"/>
<rect x="966" y="870" width="17" height="4" fill="#3f7fcc"/>
<path d="M970 868v3M979 868v3" stroke="#3a5a80"/>
<path d="M974 878h8M978 875v9" stroke="#d04a4a"/>
<path d="M962 879L970 873.5V876.5H976V881.5H970V885Z" fill="#46bf48" stroke="#2a8a2a" stroke-width=".5"/>
<path d="M996 876C1003 872 1008 877 1007 884" fill="none" stroke="#2a6ac4" stroke-width="2.6"/>
<path d="M993 875.5L999.5 871V880Z" fill="#2a6ac4"/>
<path d="M1032 876C1027 872 1022 877 1021 884" fill="none" stroke="#7fa8d8" stroke-width="2.6"/>
<path d="M1035 875.5L1028.5 871V880Z" fill="#7fa8d8"/>
<circle cx="1049" cy="875.5" r="6" fill="#c9d2da" stroke="#333" stroke-width="1.4"/>
<path d="M1053 880L1058 885" stroke="#333" stroke-width="2.4"/>
<path d="M1059.5 869V881M1057 871.5L1059.5 868.5L1062 871.5M1057 878.5L1059.5 881.5L1062 878.5" fill="none" stroke="#2040c0" stroke-width="1.3"/>
<path d="M1044 884.5H1053M1046 882.5L1043.5 884.5L1046 886.5M1051 882.5L1053.5 884.5L1051 886.5" fill="none" stroke="#2040c0" stroke-width="1.3"/>
<circle cx="1076" cy="875" r="5.5" fill="#eef3f7" stroke="#222" stroke-width="1.5"/>
<path d="M1073 875h6" stroke="#2040c0" stroke-width="2"/>
<path d="M1080 879.5L1086.5 886" stroke="#222" stroke-width="2.6"/>
<circle cx="1102" cy="875" r="5.5" fill="#eef3f7" stroke="#222" stroke-width="1.5"/>
<path d="M1099 875h6M1102 872v6" stroke="#2040c0" stroke-width="2"/>
<path d="M1106 879.5L1112.5 886" stroke="#222" stroke-width="2.6"/>
<rect x="1122" y="871" width="17" height="5" fill="#333"/>
<path d="M1124 873.5h2M1128 873.5h2M1132 873.5h2M1136 873.5h1.5" stroke="#fff" stroke-width="1.4"/>
<path d="M1128.8 878h3.4v4h2.3l-4 4.5-4-4.5h2.3z" fill="#2a6ac4"/>
</svg>
</body>
</html>
